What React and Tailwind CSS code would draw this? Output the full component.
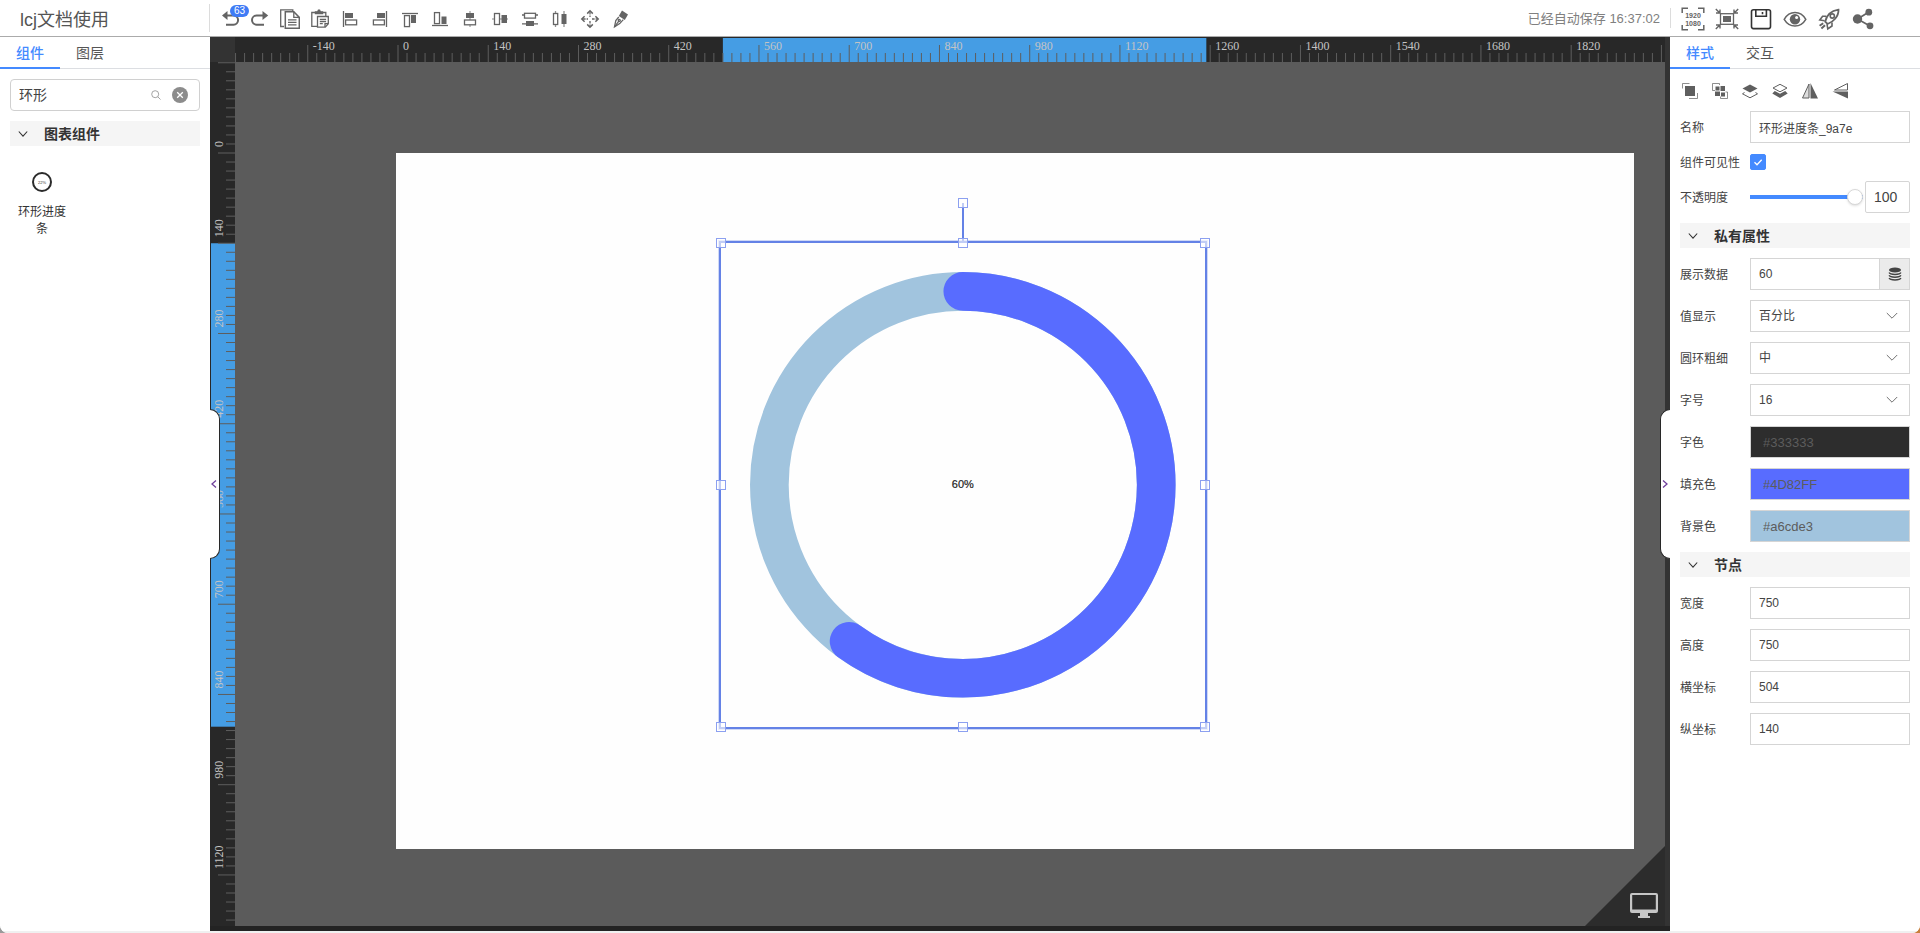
import { useState } from 'react';

const SCALE = 0.6446;
const STEP = 14;

const node = { x: 504, y: 140, width: 750, height: 750, value: 60 };

function Icon({ children, className = 'w-5 h-5', viewBox = '0 0 20 20' }) {
  return (
    <svg viewBox={viewBox} className={className} fill="none" stroke="currentColor" strokeWidth="1.3" aria-hidden="true">
      {children}
    </svg>
  );
}

const solid = { fill: 'currentColor', stroke: 'none' };

const tools = [
  {
    name: '撤销',
    badge: 63,
    icon: (
      <>
        <path d="M5 6.5h8.5a4.6 4.6 0 0 1 0 9.2H6" strokeWidth="2" />
        <path d="M7.5 2v9L2 6.5z" {...solid} />
      </>
    ),
  },
  {
    name: '重做',
    icon: (
      <>
        <path d="M15 6.5H6.6a4.6 4.6 0 0 0 0 9.2H14" strokeWidth="2" />
        <path d="M12.5 2v9L18.2 6.5z" {...solid} />
      </>
    ),
  },
  {
    name: '复制',
    icon: (
      <>
        <path d="M4 17.5H.7V.8h12.1v2" />
        <path d="M5.3 2.8h8.5l5.5 5.6v10.8h-14z" strokeWidth="1.5" />
        <path d="M13.8 2.8v5.6h5.5M8 10.8h8.5M8 13.3h8.5M8 15.8h8.5" />
      </>
    ),
  },
  {
    name: '粘贴',
    icon: (
      <>
        <path d="M7 17.3H1.8V3.5h14v3.2M7.5 17.3V7.5h10.8v7.2l-3 3.4H7.5z" />
        <path d="M4.8 2.2h2.4L8 .6h2l.8 1.6h2.4v3H4.8z" {...solid} />
        <path d="M9.8 10.3h6.3M9.8 12.5h6.3M9.8 14.7h3M15 18v-3.3h3" />
      </>
    ),
  },
  {
    name: '左对齐',
    icon: (
      <>
        <path d="M3.5 2v16" />
        <rect x="5" y="4" width="8" height="5" {...solid} />
        <rect x="5.6" y="11" width="11" height="4.8" />
      </>
    ),
  },
  {
    name: '右对齐',
    icon: (
      <>
        <path d="M16.5 2v16" />
        <rect x="7" y="4" width="8" height="5" {...solid} />
        <rect x="3.4" y="11" width="11" height="4.8" />
      </>
    ),
  },
  {
    name: '上对齐',
    icon: (
      <>
        <path d="M2 4.5h16" />
        <rect x="4.5" y="6.6" width="5" height="11" />
        <rect x="11" y="6" width="5" height="8" {...solid} />
      </>
    ),
  },
  {
    name: '下对齐',
    icon: (
      <>
        <path d="M2 16.5h16" />
        <rect x="4.5" y="3.6" width="5" height="11" />
        <rect x="11.5" y="7.5" width="5" height="7.5" {...solid} />
      </>
    ),
  },
  {
    name: '水平居中',
    icon: (
      <>
        <path d="M10 2v16" opacity=".6" />
        <rect x="6" y="4" width="8" height="5" {...solid} />
        <rect x="4.5" y="11" width="11" height="4.8" fill="#fff" />
      </>
    ),
  },
  {
    name: '垂直居中',
    icon: (
      <>
        <path d="M2 10h16" opacity=".6" />
        <rect x="4.5" y="4.5" width="5" height="11" fill="#fff" />
        <rect x="11.5" y="6" width="5.5" height="8" {...solid} />
      </>
    ),
  },
  {
    name: '垂直等距',
    icon: (
      <>
        <path d="M2 6h16M2 14.8h16" />
        <rect x="4.5" y="4.3" width="11" height="4.8" fill="#fff" />
        <rect x="6" y="12" width="8" height="5" {...solid} />
      </>
    ),
  },
  {
    name: '水平等距',
    icon: (
      <>
        <path d="M5.5 2v16M14 2v16" opacity=".7" />
        <rect x="3.5" y="4.5" width="4.2" height="11" fill="#fff" />
        <rect x="11.5" y="5" width="5" height="10" {...solid} />
      </>
    ),
  },
  {
    name: '移动',
    icon: (
      <>
        <path d="M10 3v5M10 12v5M3 10h5M12 10h5" strokeDasharray="2.6 1" />
        <path d="M7.2 4.6L10 1.8l2.8 2.8M7.2 15.4l2.8 2.8 2.8-2.8M4.6 7.2L1.8 10l2.8 2.8M15.4 7.2l2.8 2.8-2.8 2.8" strokeWidth="1.5" />
      </>
    ),
  },
  {
    name: '清除样式',
    icon: (
      <>
        <path d="M12 1.5l6 4-3.2 5.6-6-4z" {...solid} />
        <path d="M8.8 8l-3 3.6-1.3 6.200 5.200-3.200 3.600-4" />
        <path d="M4.5 17.8l4.5-6" />
        <circle cx="9.3" cy="11.4" r="1" />
      </>
    ),
  },
];

const actions = [
  {
    name: '分辨率',
    icon: (
      <>
        <path d="M1.2 6V1.2H7M17 1.2h5.8V6M22.8 18v4.8H17M7 22.8H1.2V18" strokeWidth="1.5" />
        <g {...solid} fontFamily="Liberation Sans, sans-serif" fontSize="7" fontWeight="bold" textAnchor="middle">
          <text x="12" y="11">1920</text>
          <text x="12" y="18.5">1080</text>
        </g>
      </>
    ),
  },
  {
    name: '适应屏幕',
    icon: (
      <>
        <rect x="5.5" y="6.7" width="13" height="10.6" />
        <rect x="8" y="9" width="8" height="6" {...solid} />
        <path d="M.8 2l4 4M5 2.5V6H1M23.2 2l-4 4M19 2.5V6h4M.8 22l4-4M5 21.5V18H1M23.2 22l-4-4M19 21.5V18h4" strokeWidth="1.4" />
      </>
    ),
  },
  {
    name: '保存',
    icon: (
      <g stroke="#333" strokeWidth="1.6">
        <rect x="2.5" y="2.8" width="19" height="18.8" rx="2" />
        <path d="M6.8 2.8v6.4h10.6V2.8M13.5 5v2.2" />
      </g>
    ),
  },
  {
    name: '预览',
    icon: (
      <>
        <path d="M1.2 12.3C6.5 3.2 17.5 3.2 22.8 12.3 17.5 21.2 6.5 21.2 1.2 12.3z" strokeWidth="1.5" />
        <circle cx="12" cy="12.3" r="5.2" {...solid} />
        <circle cx="13.6" cy="10.4" r="1.5" fill="#fff" stroke="none" />
      </>
    ),
  },
  {
    name: '发布',
    icon: (
      <>
        <path d="M8.2 14.6c1.2-5.6 5.4-10.6 13.3-11.9C21.7 9.8 16 15 10.6 17z" strokeWidth="1.8" />
        <path d="M9.3 9.2H5.6L2.8 13l4.8.8M15 15.5V19l-4.2 2.9-.8-4.7" strokeWidth="1.6" />
        <circle cx="15.3" cy="9" r="2.1" strokeWidth="1.6" />
        <path d="M6.2 16.2l-3.6 2.5M8 18.2l-3.6 3.3" strokeWidth="2" />
      </>
    ),
  },
  {
    name: '分享',
    icon: (
      <>
        <path d="M17.5 5.2L6.5 12l12 6.8" strokeWidth="1.7" />
        <circle cx="6.5" cy="12" r="4.7" {...solid} />
        <circle cx="17.8" cy="5.2" r="3.4" {...solid} />
        <circle cx="19" cy="18.8" r="3.4" {...solid} />
      </>
    ),
  },
];

const layerTools = [
  {
    name: '组合',
    icon: (
      <>
        <path d="M2.5 7.5v-5h7M17.5 12v5.5H9" strokeWidth="1" opacity=".7" />
        <rect x="5" y="5" width="10" height="10" {...solid} />
      </>
    ),
  },
  {
    name: '取消组合',
    icon: (
      <>
        <path d="M9.5 4V2.500h-7v7H5M15.500 11h2v6.500h-7V15.500" strokeWidth="1" opacity=".7" />
        <path d="M5.500 5.500h4v4h-4zM10.500 5H15v5h-4.500zM5 10.500h5v4.500H5zM11 11.500h4v4h-4z" {...solid} />
      </>
    ),
  },
  {
    name: '置顶',
    icon: (
      <>
        <path d="M10 3.5l7.5 4L10 11.5l-7.5-4z" {...solid} />
        <path d="M4.5 11.5l-2 1.3L10 16.8l7.5-4-2-1.3" strokeWidth="1" />
      </>
    ),
  },
  {
    name: '置底',
    icon: (
      <>
        <path d="M10 3.3l7 3.7-7 3.8L3 7z" strokeWidth="1" />
        <path d="M4.8 10L10 12.7 15.2 10l2.5 2.6L10 17l-7.7-4.4z" {...solid} />
      </>
    ),
  },
  {
    name: '水平翻转',
    icon: (
      <>
        <path d="M9 3v14H2.5z" strokeWidth="1" fill="#ddd" />
        <path d="M10.5 2v15.5H18z" {...solid} />
      </>
    ),
  },
  {
    name: '垂直翻转',
    icon: (
      <>
        <path d="M17.5 2.5V9h-13z" strokeWidth="1" />
        <path d="M18 17.5V10.5H2.5z" {...solid} />
      </>
    ),
  },
];

function Ruler({ vertical, zero, selStart, selEnd, first, last }) {
  const ticks = [];
  for (let i = -20; i <= 180; i++) {
    ticks.push({ i, pos: zero + i * STEP * SCALE, major: i % 10 === 0 });
  }
  const size = (selEnd - selStart) * SCALE;
  const from = zero + selStart * SCALE;

  return (
    <svg className="w-full h-full block bg-[#282828]" aria-hidden="true">
      {vertical ? (
        <rect x="1" y={from} width="24" height={size} fill="#459de4" />
      ) : (
        <rect x={from} y="1" width={size} height="24" fill="#459de4" />
      )}
      {ticks.map(({ i, pos, major }) =>
        vertical ? (
          <line key={i} x1={major ? 8 : 16} x2="25" y1={pos} y2={pos} stroke="#5e5e5e" />
        ) : (
          <line key={i} y1={major ? 8 : 16} y2="25" x1={pos} x2={pos} stroke="#5e5e5e" />
        )
      )}
      <g fill="#c4c4c4" fontSize="12" fontFamily="Liberation Serif, serif">
        {ticks
          .filter((t) => t.major && t.i * STEP >= first && t.i * STEP <= last)
          .map(({ i, pos }) =>
            vertical ? (
              <text key={i} transform={`translate(13 ${pos - 6}) rotate(-90)`}>{i * STEP}</text>
            ) : (
              <text key={i} x={pos + 5} y="13">{i * STEP}</text>
            )
          )}
      </g>
    </svg>
  );
}

function Tabs({ items }) {
  const [active, setActive] = useState(items[0]);
  return (
    <div className="flex h-8 border-b border-[#dcdee2] text-sm">
      {items.map((item) => (
        <button
          key={item}
          type="button"
          onClick={() => setActive(item)}
          className={
            item === active
              ? 'w-[60px] h-8 pt-0.5 border-b-2 border-[#448aff] text-[#448aff] font-medium'
              : 'w-[60px] h-8 pt-0.5 border-b-2 border-transparent text-[#555]'
          }
        >
          {item}
        </button>
      ))}
    </div>
  );
}

function SectionTitle({ children }) {
  return (
    <h2 className="flex items-center h-[25px] px-2 gap-4 bg-[#f5f5f5] text-sm font-bold text-[#333]">
      <Icon viewBox="0 0 10 10" className="w-[10px] h-[10px]">
        <path d="M.8 2.5L5 7.2l4.2-4.7" strokeWidth="1.1" />
      </Icon>
      {children}
    </h2>
  );
}

function Row({ label, id, children }) {
  return (
    <div className="flex items-center">
      <label htmlFor={id} className="w-[70px] shrink-0 pt-0.5 text-xs text-[#444]">{label}</label>
      <div className="flex-1 min-w-0 flex items-center">{children}</div>
    </div>
  );
}

function TextRow({ label, id, value }) {
  return (
    <Row label={label} id={id}>
      <input id={id} type="text" defaultValue={value} className="w-full h-8 px-2 border border-[#d5d5d5] text-xs text-[#444]" />
    </Row>
  );
}

function SelectRow({ label, id, value }) {
  return (
    <Row label={label} id={id}>
      <div className="relative w-full">
        <select id={id} defaultValue={value} className="appearance-none w-full h-8 px-2 border border-[#d5d5d5] bg-white text-xs text-[#444]">
          <option>{value}</option>
        </select>
        <Icon viewBox="0 0 12 12" className="absolute right-3 top-[10px] w-3 h-3 text-[#707070] pointer-events-none">
          <path d="M.8 3l5.2 5.200 5.200-5.200" strokeWidth="1" />
        </Icon>
      </div>
    </Row>
  );
}

function ColorRow({ label, id, value, tone }) {
  return (
    <Row label={label} id={id}>
      <input id={id} type="text" defaultValue={value} className={`w-full h-8 px-3 border border-[#d5d5d5] text-[13px] text-[#5c5c5c] ${tone}`} />
    </Row>
  );
}

function ComponentPanel() {
  return (
    <aside className="w-[210px] shrink-0 bg-white">
      <Tabs items={['组件', '图层']} />
      <div className="flex flex-col gap-[10px] px-[10px] pt-[10px]">
        <div className="relative">
          <input
            type="text"
            aria-label="搜索组件"
            defaultValue="环形"
            className="w-full h-8 pl-2 pr-14 pb-0.5 border border-[#d0d0d0] rounded-sm text-sm text-[#444]"
          />
          <Icon viewBox="0 0 10 10" className="absolute right-[39px] top-[11px] w-[10px] h-[10px] text-[#999]">
            <circle cx="4.2" cy="4.2" r="3.5" strokeWidth=".9" />
            <path d="M6.8 6.8l2.7 2.7" strokeWidth=".9" />
          </Icon>
          <button type="button" aria-label="清空" className="absolute right-3 top-2 w-4 h-4 rounded-full bg-[#8c8c8c] text-white">
            <Icon viewBox="0 0 16 16" className="w-4 h-4">
              <path d="M5.2 5.2l5.6 5.6M10.8 5.2l-5.6 5.6" />
            </Icon>
          </button>
        </div>
        <SectionTitle>图表组件</SectionTitle>
        <button type="button" className="w-16 px-2 mt-4 flex flex-col items-center gap-3 text-xs leading-[17px] text-[#333]">
          <svg viewBox="0 0 20 20" className="w-5 h-5" aria-hidden="true">
            <circle cx="10" cy="10" r="9" fill="none" stroke="#2b2b2b" strokeWidth="2" />
            <text x="10" y="11.5" fontSize="4" textAnchor="middle" fill="#333" fontFamily="Liberation Sans, sans-serif">22%</text>
          </svg>
          环形进度条
        </button>
      </div>
    </aside>
  );
}

const handles = [
  'left-0 top-0',
  'left-1/2 top-0',
  'left-full top-0',
  'left-0 top-1/2',
  'left-full top-1/2',
  'left-0 top-full',
  'left-1/2 top-full',
  'left-full top-full',
];

function RingProgress() {
  const place = {
    left: `${(node.x / 1920) * 100}%`,
    top: `${(node.y / 1080) * 100}%`,
    width: `${(node.width / 1920) * 100}%`,
    height: `${(node.height / 1080) * 100}%`,
  };
  return (
    <div className="absolute" style={place}>
      <svg viewBox="0 0 750 750" className="w-full h-full block">
        <circle cx="375" cy="375" r="300" fill="none" stroke="#a1c4de" strokeWidth="60" />
        <circle
          cx="375"
          cy="375"
          r="300"
          fill="none"
          stroke="#586cff"
          strokeWidth="60"
          strokeLinecap="round"
          pathLength="100"
          strokeDasharray={`${node.value} 100`}
          transform="rotate(-90 375 375)"
        />
        <text x="375" y="380" fontSize="17" textAnchor="middle" fill="#222" stroke="#222" strokeWidth=".3" fontFamily="Liberation Sans, sans-serif">
          {node.value}%
        </text>
      </svg>
      {/* 选中框 */}
      <div className="absolute -inset-0.5 border-2 border-[#6482e6] ring-1 ring-[#6482e6]/30" />
      <div className="absolute left-1/2 -top-10 h-10 w-0.5 -translate-x-1/2 bg-[#6482e6]" />
      <span className="absolute left-1/2 -top-10 w-[10px] h-[10px] -translate-x-1/2 -translate-y-1/2 border border-[#8ca0f0] bg-white/60" />
      {handles.map((pos) => (
        <span key={pos} className={`absolute w-[10px] h-[10px] -translate-x-1/2 -translate-y-1/2 border border-[#8ca0f0] bg-white/60 ${pos}`} />
      ))}
    </div>
  );
}

function Stage() {
  return (
    <main className="relative flex-1 min-w-0 flex flex-col bg-[#333] overflow-hidden">
      <div className="flex h-[25px] shrink-0">
        <div className="w-[25px] shrink-0" />
        <div className="flex-1 mr-[5px]">
          <Ruler zero={163} selStart={node.x} selEnd={node.x + node.width} first={-140} last={1820} />
        </div>
      </div>
      <div className="flex flex-1 min-h-0">
        <div className="w-[25px] shrink-0">
          <Ruler vertical zero={91} selStart={node.y} selEnd={node.y + node.height} first={0} last={1120} />
        </div>
        <div className="relative flex-1 mr-[5px] bg-[#5b5b5b] pl-[161px] pr-[31px] pt-[91px] overflow-hidden">
          <div className="relative aspect-video bg-[#fefefe]">
            <RingProgress />
          </div>
          <button type="button" aria-label="画布预览" className="absolute right-0 bottom-0 w-20 h-20">
            <svg viewBox="0 0 80 80" className="w-20 h-20" aria-hidden="true">
              <path d="M80 0v80H0z" fill="#2c2c2c" />
              <path d="M47 47h24a2 2 0 0 1 2 2v16a2 2 0 0 1-2 2h-8v3h2v2H53v-2h2v-3h-8a2 2 0 0 1-2-2V49a2 2 0 0 1 2-2zM47.2 49v14.5h23.6V49z" fill="#c6c6c6" fillRule="evenodd" />
            </svg>
          </button>
        </div>
      </div>
      <div className="h-[5px] shrink-0 bg-[#232323]" />
      <button
        type="button"
        aria-label="收起左侧面板"
        className="absolute left-0 top-1/2 -translate-y-1/2 w-[10px] h-[150px] bg-white border border-l-0 border-[#282828] rounded-r-[10px] text-[#70409c]"
      >
        <Icon viewBox="0 0 8 8" className="w-2 h-2">
          <path d="M6 .5L2 4l4 3.5" />
        </Icon>
      </button>
      <button
        type="button"
        aria-label="收起右侧面板"
        className="absolute right-0 top-1/2 -translate-y-1/2 w-[10px] h-[150px] bg-white border border-r-0 border-[#282828] rounded-l-[10px] text-[#70409c]"
      >
        <Icon viewBox="0 0 8 8" className="w-2 h-2">
          <path d="M2 .5L6 4 2 7.5" />
        </Icon>
      </button>
    </main>
  );
}

function StylePanel() {
  return (
    <aside className="w-[250px] shrink-0 bg-white">
      <Tabs items={['样式', '交互']} />
      <div className="flex flex-col gap-[10px] px-[10px] pt-3">
        <div className="flex gap-[10px] text-[#5f5f5f]">
          {layerTools.map((tool) => (
            <button key={tool.name} type="button" aria-label={tool.name}>
              <Icon>{tool.icon}</Icon>
            </button>
          ))}
        </div>
        <TextRow label="名称" id="name" value="环形进度条_9a7e" />
        <Row label="组件可见性" id="visible">
          <div className="relative w-4 h-[18px] flex items-center">
            <input id="visible" type="checkbox" defaultChecked className="peer appearance-none w-4 h-4 rounded-xs border border-[#448aff] checked:bg-[#448aff]" />
            <Icon viewBox="0 0 16 16" className="absolute inset-x-0 top-px w-4 h-4 text-white pointer-events-none opacity-0 peer-checked:opacity-100">
              <path d="M4.5 8.3l2.5 2.5 4.7-5" />
            </Icon>
          </div>
        </Row>
        <Row label="不透明度" id="opacity">
          <div className="flex flex-1 min-w-0 items-center gap-0.5">
            <input
              id="opacity"
              type="range"
              defaultValue="100"
              className="flex-1 min-w-0 h-1 appearance-none bg-[#448aff] [&::-webkit-slider-thumb]:appearance-none [&::-webkit-slider-thumb]:w-4 [&::-webkit-slider-thumb]:h-4 [&::-webkit-slider-thumb]:rounded-full [&::-webkit-slider-thumb]:bg-white [&::-webkit-slider-thumb]:border [&::-webkit-slider-thumb]:border-[#d8d8d8] [&::-webkit-slider-thumb]:shadow"
            />
            <input type="text" aria-label="不透明度数值" defaultValue="100" className="w-[45px] shrink-0 h-8 px-2 border border-[#d5d5d5] rounded-xs text-sm text-[#444]" />
          </div>
        </Row>
        <SectionTitle>私有属性</SectionTitle>
        <Row label="展示数据" id="data">
          <input id="data" type="text" defaultValue="60" className="flex-1 min-w-0 h-8 px-2 border border-[#d5d5d5] text-xs text-[#444]" />
          <button type="button" aria-label="数据源" className="w-[30px] h-8 flex items-center justify-center border border-l-0 border-[#d5d5d5] bg-[#ebebeb] text-[#444]">
            <Icon viewBox="0 0 14 14" className="w-[14px] h-[14px]">
              <ellipse cx="7" cy="3" rx="6" ry="2.4" {...solid} />
              <path d="M1.2 5.5c1 2.6 10.6 2.6 11.6 0M1.2 8.3c1 2.6 10.6 2.6 11.6 0M1.2 11c1 2.6 10.6 2.6 11.6 0" strokeWidth="1.6" />
            </Icon>
          </button>
        </Row>
        <SelectRow label="值显示" id="display" value="百分比" />
        <SelectRow label="圆环粗细" id="thickness" value="中" />
        <SelectRow label="字号" id="fontSize" value="16" />
        <ColorRow label="字色" id="fontColor" value="#333333" tone="bg-[#2d2d2d]" />
        <ColorRow label="填充色" id="fillColor" value="#4D82FF" tone="bg-[#586cff]" />
        <ColorRow label="背景色" id="bgColor" value="#a6cde3" tone="bg-[#a1c4de]" />
        <SectionTitle>节点</SectionTitle>
        <TextRow label="宽度" id="width" value={node.width} />
        <TextRow label="高度" id="height" value={node.height} />
        <TextRow label="横坐标" id="x" value={node.x} />
        <TextRow label="纵坐标" id="y" value={node.y} />
      </div>
    </aside>
  );
}

function Header() {
  return (
    <header className="flex items-center h-[37px] shrink-0 border-b border-[#ababab] bg-white text-[#646464]">
      <h1 className="w-[210px] h-7 pl-5 pt-0.5 border-r border-[#dcdcdc] text-lg leading-7 text-[#555]">lcj文档使用</h1>
      <div className="flex pl-[5px] pt-0.5">
        {tools.map((tool) => (
          <button key={tool.name} type="button" aria-label={tool.name} className="relative w-[30px] flex justify-center">
            <Icon>{tool.icon}</Icon>
            {tool.badge && (
              <span className="absolute left-[15px] -top-1 h-3 px-1 rounded-full bg-[#3f7bf5] text-[10px] leading-3 text-white">{tool.badge}</span>
            )}
          </button>
        ))}
      </div>
      <p className="ml-auto pr-[10px] pt-0.5 text-[13px] text-[#808080]">已经自动保存 16:37:02</p>
      <div className="flex w-[250px] h-5 items-center gap-[10px] pl-[10px] border-l border-[#dcdcdc]">
        {actions.map((action) => (
          <button key={action.name} type="button" aria-label={action.name} className="pt-0.5">
            <Icon viewBox="0 0 24 24" className="w-6 h-6">{action.icon}</Icon>
          </button>
        ))}
      </div>
    </header>
  );
}

export default function App() {
  return (
    <div className="h-screen bg-linear-to-r from-[#9a9a9a] to-[#c87f3c]">
      <div className="h-full flex flex-col overflow-hidden rounded-b-lg bg-white font-['Liberation_Sans','Noto_Sans_CJK_SC',sans-serif]">
        <Header />
        <div className="flex flex-1 min-h-0">
          <ComponentPanel />
          <Stage />
          <StylePanel />
        </div>
        <div className="h-0.5 shrink-0 bg-[#f0f0f0]" />
      </div>
    </div>
  );
}
